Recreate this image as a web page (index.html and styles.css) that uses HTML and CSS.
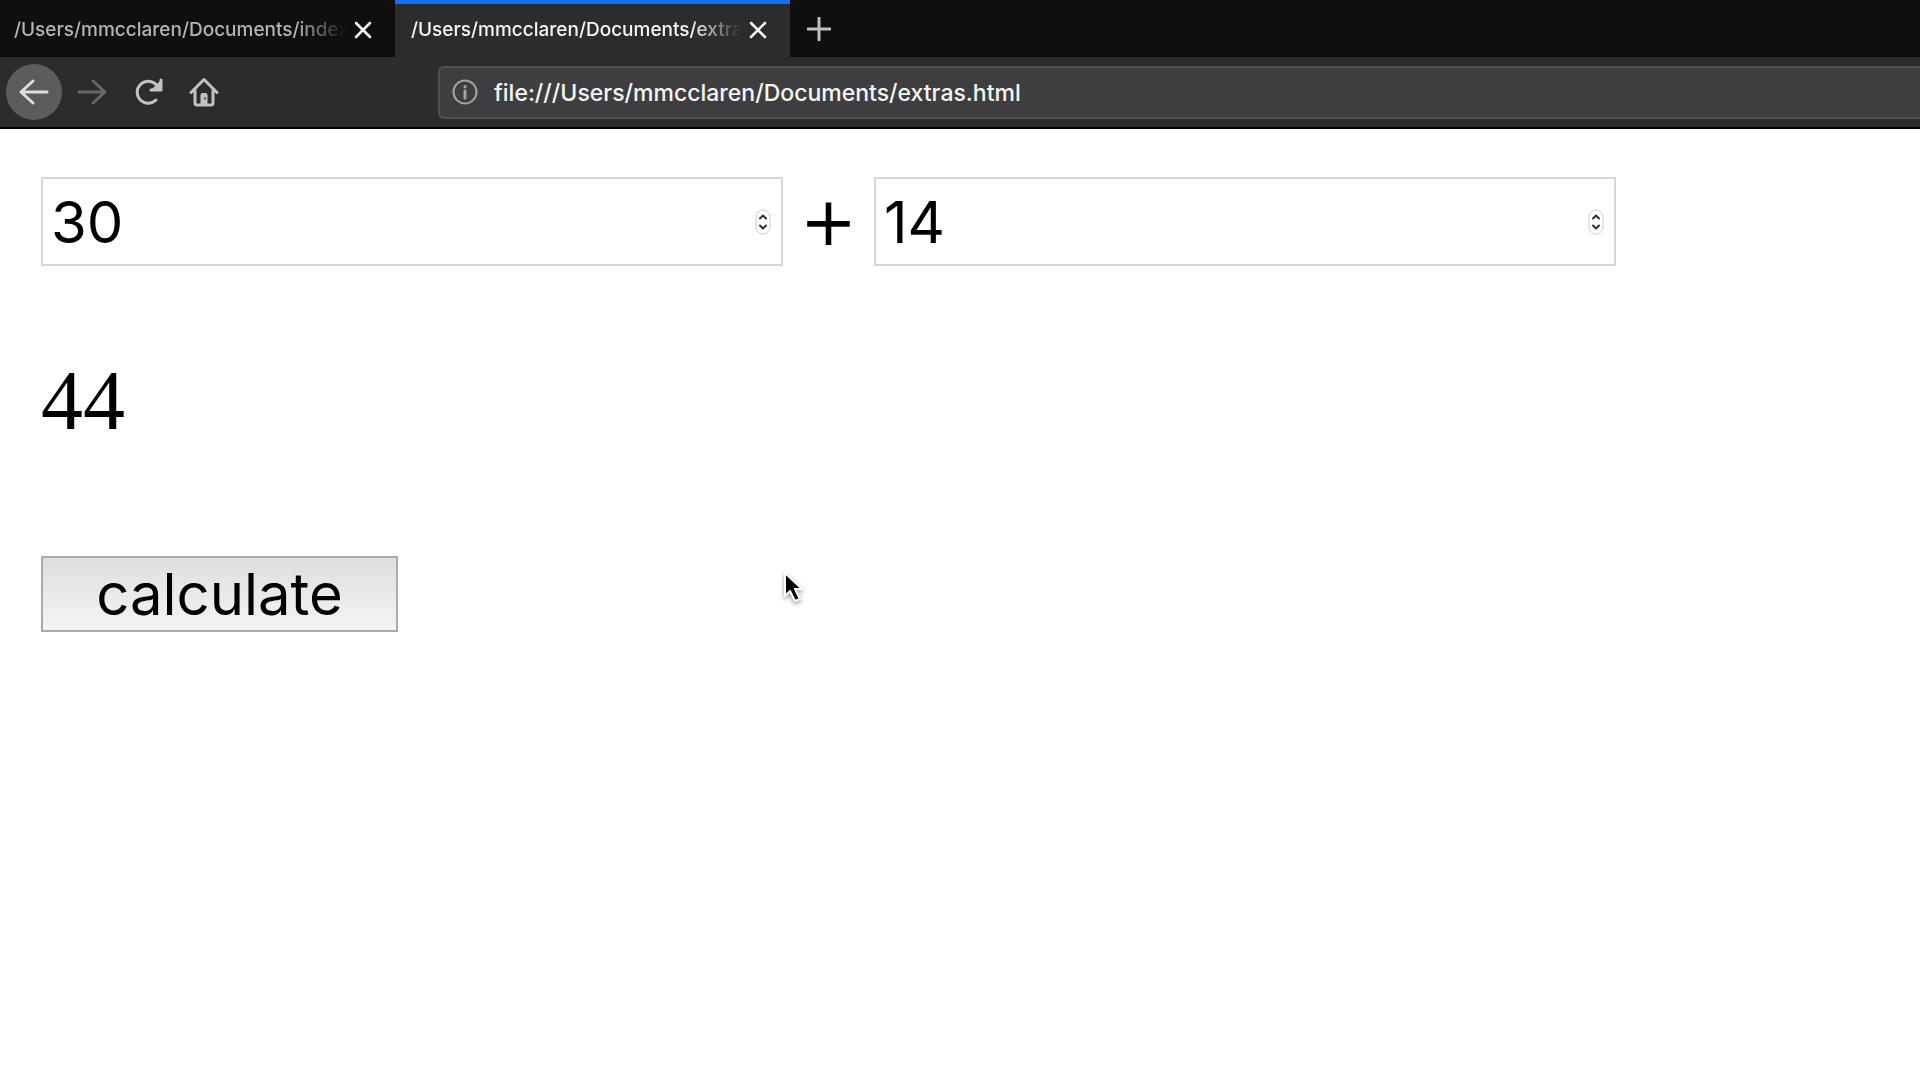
FILE: index.html
```html
<!DOCTYPE html>
<html lang="en">
<head>
<meta charset="utf-8">
<title>extras</title>
<link rel="stylesheet" href="styles.css">
</head>
<body>
<header class="browser">
  <div class="tabs">
    <div class="tab">
      <a class="tab-title" href="#">/Users/mmcclaren/Documents/index.html</a>
      <button class="close" type="button" aria-label="Close tab"><svg width="18" height="18" viewBox="0 0 18 18"><path d="M2 2l14 14M16 2L2 16"/></svg></button>
    </div>
    <div class="tab active">
      <a class="tab-title" href="#">/Users/mmcclaren/Documents/extras.html</a>
      <button class="close" type="button" aria-label="Close tab"><svg width="18" height="18" viewBox="0 0 18 18"><path d="M2 2l14 14M16 2L2 16"/></svg></button>
    </div>
    <button class="new-tab" type="button" aria-label="New tab"><svg width="24" height="24" viewBox="0 0 24 24"><path d="M12 1v22M1 12h22"/></svg></button>
  </div>
  <div class="toolbar">
    <nav class="nav">
      <button class="nav-button back" type="button" aria-label="Back"><svg width="32" height="32" viewBox="0 0 32 32"><path d="M29 16H4M15 5L3 16l12 11"/></svg></button>
      <button class="nav-button forward" type="button" aria-label="Forward"><svg width="32" height="32" viewBox="0 0 32 32"><path d="M3 16h25M17 5l12 11-12 11"/></svg></button>
      <button class="nav-button" type="button" aria-label="Reload"><svg width="32" height="32" viewBox="0 0 32 32"><path d="M24 24A11 11 0 1 1 24 8.500"/><path d="M29 4v10H19"/><path class="fill" d="M29 4v10H19z"/></svg></button>
      <button class="nav-button" type="button" aria-label="Home"><svg width="32" height="32" viewBox="0 0 32 32"><path d="M3 16.500L16 3.500l13 13M7 14v13q0 2 2 2h14q2 0 2-2V14"/><path class="fill" d="M12.500 28V19q0-2 2-2h3q2 0 2 2v9z"/><path class="knob" d="M16 21.500h2v2h-2z"/></svg></button>
    </nav>
    <div class="url-bar">
      <svg class="info" width="26" height="26" viewBox="0 0 26 26"><circle cx="13" cy="13" r="11.500"/><path class="letter" d="M13 12v7M13 7.500v.5"/></svg>
      <input class="url" type="text" aria-label="Address" value="file:///Users/mmcclaren/Documents/extras.html">
    </div>
  </div>
</header>
<main class="page">
  <div class="sum">
    <div class="field">
      <input class="number" type="number" aria-label="First number" value="30">
      <svg class="stepper" width="16" height="26" viewBox="0 0 16 26"><rect x="1" y="1" width="14" height="24" rx="7"/><path d="M5 9.500l3-3 3 3M5 16.500l3 3 3-3"/></svg>
    </div>
    <span class="plus">+</span>
    <div class="field">
      <input class="number" type="number" aria-label="Second number" value="14">
      <svg class="stepper" width="16" height="26" viewBox="0 0 16 26"><rect x="1" y="1" width="14" height="24" rx="7"/><path d="M5 9.500l3-3 3 3M5 16.500l3 3 3-3"/></svg>
    </div>
  </div>
  <p class="result">44</p>
  <button class="calculate" type="button">calculate</button>
</main>
<svg class="pointer" width="24" height="36" viewBox="0 0 24 36"><path d="M3 3v23l5-5 5 10 5-2-5-10h7z"/></svg>
</body>
</html>
```
FILE: styles.css
```css
* { box-sizing: border-box; }
body {
  margin: 0;
  background: #fff;
  color: #000;
  font-family: Inter, "Liberation Sans", sans-serif;
}
button { font: inherit; border: 0; padding: 0; background: none; }
svg { display: block; fill: none; stroke-linecap: round; stroke-linejoin: round; }

.browser { border-bottom: 2px solid #000; }
.tabs { display: flex; height: 57px; background: #0f0f0f; }
.tab {
  display: flex;
  align-items: center;
  width: 395px;
  padding: 0 23px 2px 14px;
  gap: 8px;
  border-top: 4px solid transparent;
  color: #b4b4b4;
}
.active { background: #2c2c2e; border-top-color: #1470f0; color: #f4f4f4; padding-left: 16px; }
.tab-title {
  flex: 1;
  overflow: hidden;
  white-space: nowrap;
  font-size: 19px;
  font-weight: 500;
  line-height: 28px;
  color: inherit;
  text-decoration: none;
  -webkit-mask-image: linear-gradient(to right, #000 85%, transparent);
  mask-image: linear-gradient(to right, #000 85%, transparent);
}
.close svg { stroke: #fff; stroke-width: 2.500; }
.new-tab { padding: 0 17px; }
.new-tab svg { stroke: #c0c0c0; stroke-width: 3; }

.toolbar { display: flex; align-items: center; height: 70px; background: #2c2c2e; }
.nav { display: flex; width: 438px; padding-left: 6px; }
.nav-button { display: grid; place-items: center; width: 56px; height: 56px; }
.nav-button svg { stroke: #c2c2c4; stroke-width: 3; }
.nav-button .fill { fill: #c2c2c4; stroke: none; }
.nav-button .knob { fill: #444; stroke: none; }
.back { border-radius: 50%; background: #5c5c5c; }
.nav-button.back svg { stroke: #dedede; }
.forward { margin-left: 2px; }
.nav-button.forward svg { stroke: #666; }
.url-bar {
  display: flex;
  flex: 1;
  align-items: center;
  gap: 16px;
  height: 53px;
  padding-left: 12px;
  background: #3e3e40;
  border: 2px solid #505052;
  border-right: 0;
  border-radius: 6px 0 0 6px;
}
.info { stroke: #a4a4a6; stroke-width: 2; }
.info .letter { stroke-width: 3; }
.url {
  flex: 1;
  padding: 2px 0 0;
  border: 0;
  outline: 0;
  background: none;
  color: #f6f6f6;
  font: 500 23px/32px Inter, "Liberation Sans", sans-serif;
}

.page { padding: 48px 41px; }
.sum { display: flex; align-items: center; max-width: 1575px; }
.field {
  display: flex;
  flex: 1;
  align-items: center;
  min-width: 0;
  height: 89px;
  padding: 0 10px 0 8px;
  border: 2px solid #d6d6d6;
}
.number {
  flex: 1;
  min-width: 0;
  padding: 0;
  border: 0;
  outline: 0;
  background: none;
  color: #000;
  font: 58px/70px Inter, "Liberation Sans", sans-serif;
  appearance: textfield;
  -moz-appearance: textfield;
}
.number::-webkit-inner-spin-button { appearance: none; -webkit-appearance: none; margin: 0; }
.stepper { stroke: #333; stroke-width: 2; }
.stepper rect { fill: #fff; stroke: #ccc; stroke-width: 1; }
.plus { flex: none; width: 91px; text-align: center; font: 68px/80px "DejaVu Sans", sans-serif; }
.result { margin: 88px 0 108px; font: 84px/94px "Liberation Serif", serif; }
.calculate {
  display: block;
  width: 357px;
  height: 76px;
  border: 2px solid #ababab;
  background: linear-gradient(#dedede, #f4f4f4);
  font-size: 58px;
  line-height: 70px;
}
.pointer { position: absolute; left: 782px; top: 570px; fill: #000; stroke: #fff; stroke-width: 2; filter: drop-shadow(0 2px 2px #0006); }
```
